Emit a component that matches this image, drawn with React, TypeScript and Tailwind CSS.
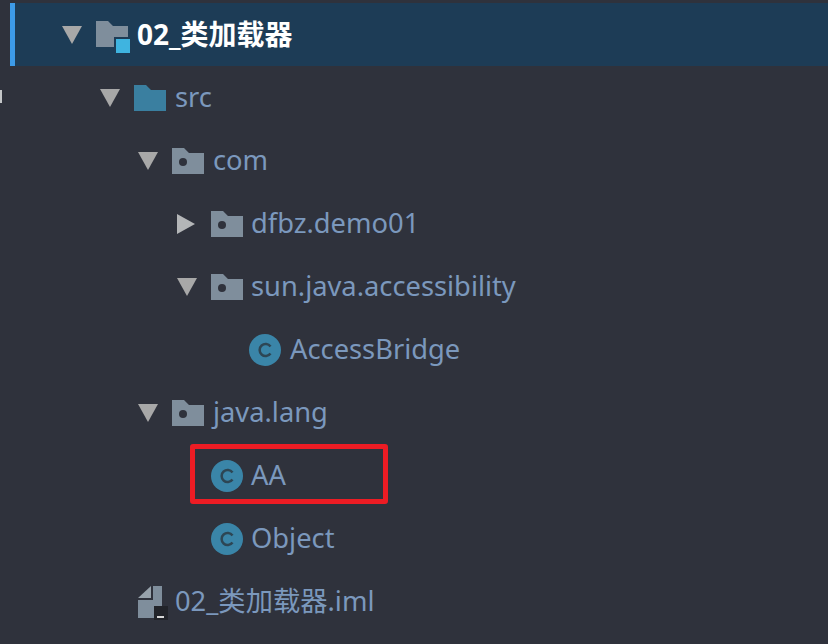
import React from "react";

type Kind = "module" | "source" | "package" | "class" | "iml";

type Row = {
  name: string;
  kind: Kind;
  pad: string;
  gap: string;
  arrow?: "down" | "right";
  selected?: boolean;
  marked?: boolean;
};

const rows: Row[] = [
  { name: "02_类加载器", kind: "module", pad: "pl-[62px]", gap: "ml-[9px]", arrow: "down", selected: true },
  { name: "src", kind: "source", pad: "pl-[100px]", gap: "ml-[9px]", arrow: "down" },
  { name: "com", kind: "package", pad: "pl-[138px]", gap: "ml-[9px]", arrow: "down" },
  { name: "dfbz.demo01", kind: "package", pad: "pl-[177px]", gap: "ml-[8px]", arrow: "right" },
  { name: "sun.java.accessibility", kind: "package", pad: "pl-[177px]", gap: "ml-[8px]", arrow: "down" },
  { name: "AccessBridge", kind: "class", pad: "pl-[215px]", gap: "ml-[9px]" },
  { name: "java.lang", kind: "package", pad: "pl-[138px]", gap: "ml-[9px]", arrow: "down" },
  { name: "AA", kind: "class", pad: "pl-[177px]", gap: "ml-[8px]", marked: true },
  { name: "Object", kind: "class", pad: "pl-[177px]", gap: "ml-[8px]" },
  { name: "02_类加载器.iml", kind: "iml", pad: "pl-[100px]", gap: "ml-[9px]" },
];

const folderPath = "M0 0H12L17 5H32V26H0Z";

const Arrow = ({ dir }: { dir?: "down" | "right" }) => {
  if (!dir) return <span className="w-5 shrink-0" />;
  return (
    <svg width="20" height="20" viewBox="0 0 20 20" className="shrink-0">
      {dir === "down" ? (
        <polygon points="0,1 20,1 10,19" fill="#a8a8a8" />
      ) : (
        <polygon points="0,0 18,10 0,20" fill="#b4b6b8" />
      )}
    </svg>
  );
};

const Icon = ({ kind }: { kind: Kind }) => {
  if (kind === "class") {
    return (
      <svg width="32" height="32" viewBox="0 0 32 32" className="shrink-0">
        <circle cx="16" cy="16" r="16" fill="#3a85a8" />
        <path d="M21.5 12.5A6 6 0 1 0 21.5 19.5" fill="none" stroke="#2d4654" strokeWidth="2.5" />
      </svg>
    );
  }
  if (kind === "iml") {
    return (
      <svg width="34" height="36" viewBox="0 0 34 36" className="shrink-0">
        <path d="M4 14L17 2V14Z" fill="#98a3ac" />
        <path d="M19 2H28V34H4V16H19Z" fill="#7f8e9c" />
        <rect x="20" y="22" width="14" height="14" fill="#22242a" />
        <rect x="23" y="32" width="7" height="2" fill="#d8d8d8" />
      </svg>
    );
  }
  if (kind === "module") {
    return (
      <svg width="34" height="32" viewBox="0 0 34 32" className="mt-[5px] shrink-0">
        <path d={folderPath} fill="#7f8e9c" />
        <rect x="18" y="16" width="16" height="16" fill="#1d3c56" />
        <rect x="20" y="18" width="14" height="14" fill="#3fb4e0" />
      </svg>
    );
  }
  return (
    <svg width="32" height="26" viewBox="0 0 32 26" className="shrink-0">
      <path d={folderPath} fill={kind === "source" ? "#3a7fa0" : "#7f8e9c"} />
      {kind === "package" && <circle cx="11" cy="14" r="4" fill="#2f323c" />}
    </svg>
  );
};

export default function App() {
  return (
    <div
      className="relative h-[644px] w-[828px] overflow-hidden bg-[#2f323c] pt-[3px]"
      style={{ fontFamily: '"Noto Sans", "Noto Sans CJK SC", sans-serif' }}
    >
      <span className="absolute left-0 top-[90px] h-[13px] w-[2px] bg-[#c4c6c8]" />
      {rows.map((row) => (
        <div
          key={row.name}
          className={`relative flex h-[63px] items-center ${row.pad} ${
            row.selected ? "ml-[10px] border-l-[5px] border-[#3d9be8] bg-[#1d3c56] !pl-[47px]" : ""
          }`}
        >
          <Arrow dir={row.arrow} />
          <span className="ml-[14px] flex w-[32px] shrink-0 items-center">
            <Icon kind={row.kind} />
          </span>
          <span
            className={`${row.gap} whitespace-nowrap pb-[2px] leading-none ${
              row.selected ? "text-[28px] font-bold text-white" : "text-[27.3px] text-[#7b98bd]"
            }`}
          >
            {row.name}
          </span>
          {row.marked && (
            <span className="absolute left-[190px] top-0 h-[60px] w-[198px] rounded-[3px] border-[5px] border-[#ed1c24]" />
          )}
        </div>
      ))}
    </div>
  );
}
